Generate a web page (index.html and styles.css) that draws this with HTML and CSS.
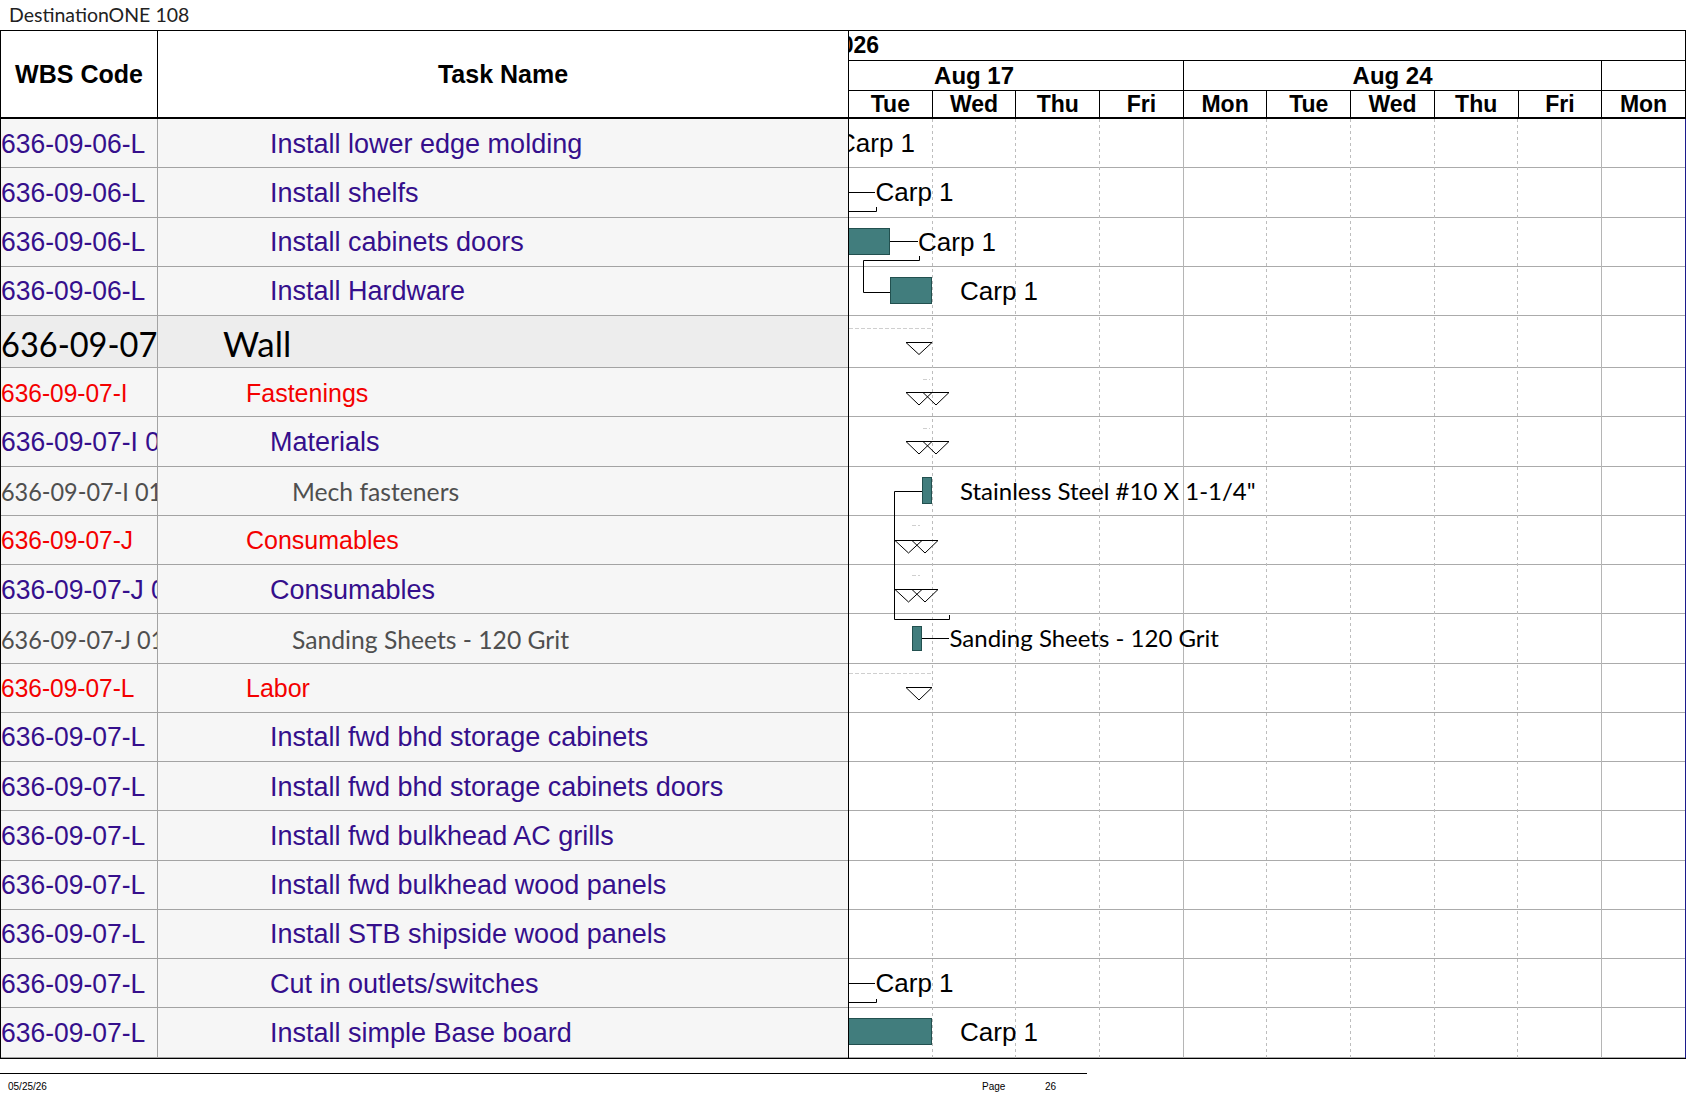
FILE: index.html
```html
<!DOCTYPE html>
<html lang="en">
<head>
<meta charset="utf-8">
<title>DestinationONE 108</title>
<link rel="stylesheet" href="styles.css">
</head>
<body>
<div class="title">DestinationONE 108</div>
<div class="chart">
  <div class="table">
    <div class="thead">
      <div class="th th-wbs">WBS Code</div>
      <div class="th th-name">Task Name</div>
    </div>
    <div class="row task"><div class="wbs"><span>636-09-06-L</span></div><div class="name l3">Install lower edge molding</div></div>
    <div class="row task"><div class="wbs"><span>636-09-06-L</span></div><div class="name l3">Install shelfs</div></div>
    <div class="row task"><div class="wbs"><span>636-09-06-L</span></div><div class="name l3">Install cabinets doors</div></div>
    <div class="row task"><div class="wbs"><span>636-09-06-L</span></div><div class="name l3">Install Hardware</div></div>
    <div class="row wall"><div class="wbs"><span>636-09-07</span></div><div class="name l1">Wall</div></div>
    <div class="row sum"><div class="wbs"><span>636-09-07-I</span></div><div class="name l2">Fastenings</div></div>
    <div class="row task"><div class="wbs"><span>636-09-07-I 01</span></div><div class="name l3">Materials</div></div>
    <div class="row res"><div class="wbs"><span>636-09-07-I 01 01</span></div><div class="name l4">Mech fasteners</div></div>
    <div class="row sum"><div class="wbs"><span>636-09-07-J</span></div><div class="name l2">Consumables</div></div>
    <div class="row task"><div class="wbs"><span>636-09-07-J 01</span></div><div class="name l3">Consumables</div></div>
    <div class="row res"><div class="wbs"><span>636-09-07-J 01 01</span></div><div class="name l4">Sanding Sheets - 120 Grit</div></div>
    <div class="row sum"><div class="wbs"><span>636-09-07-L</span></div><div class="name l2">Labor</div></div>
    <div class="row task"><div class="wbs"><span>636-09-07-L</span></div><div class="name l3">Install fwd bhd storage cabinets</div></div>
    <div class="row task"><div class="wbs"><span>636-09-07-L</span></div><div class="name l3">Install fwd bhd storage cabinets doors</div></div>
    <div class="row task"><div class="wbs"><span>636-09-07-L</span></div><div class="name l3">Install fwd bulkhead AC grills</div></div>
    <div class="row task"><div class="wbs"><span>636-09-07-L</span></div><div class="name l3">Install fwd bulkhead wood panels</div></div>
    <div class="row task"><div class="wbs"><span>636-09-07-L</span></div><div class="name l3">Install STB shipside wood panels</div></div>
    <div class="row task"><div class="wbs"><span>636-09-07-L</span></div><div class="name l3">Cut in outlets/switches</div></div>
    <div class="row task"><div class="wbs"><span>636-09-07-L</span></div><div class="name l3">Install simple Base board</div></div>
  </div>

  <div class="gantt">
    <div class="timescale">
      <div class="strip">
        <div class="tier year">August 2026</div>
        <div class="tier weeks">
          <div class="wk">Aug 17</div>
          <div class="wk">Aug 24</div>
          <div class="wk">Aug 31</div>
        </div>
        <div class="tier days">
          <div class="day">Mon</div><div class="day">Tue</div><div class="day">Wed</div><div class="day">Thu</div><div class="day">Fri</div>
          <div class="day">Mon</div><div class="day">Tue</div><div class="day">Wed</div><div class="day">Thu</div><div class="day">Fri</div>
          <div class="day">Mon</div>
        </div>
      </div>
    </div>
    <div class="gbody">
      <div class="grow"></div><div class="grow"></div><div class="grow"></div><div class="grow"></div>
      <div class="grow grow-wall"></div>
      <div class="grow"></div><div class="grow"></div><div class="grow"></div><div class="grow"></div>
      <div class="grow"></div><div class="grow"></div><div class="grow"></div><div class="grow"></div>
      <div class="grow"></div><div class="grow"></div><div class="grow"></div><div class="grow"></div>
      <div class="grow"></div><div class="grow"></div>

      <svg class="canvas" viewBox="849 119 836 939" width="836" height="939" xmlns="http://www.w3.org/2000/svg">
        <g class="grid-dash">
          <line x1="932.5" y1="119" x2="932.5" y2="1058"/>
          <line x1="1015.5" y1="119" x2="1015.5" y2="1058"/>
          <line x1="1099.5" y1="119" x2="1099.5" y2="1058"/>
          <line x1="1266.5" y1="119" x2="1266.5" y2="1058"/>
          <line x1="1350.5" y1="119" x2="1350.5" y2="1058"/>
          <line x1="1434.5" y1="119" x2="1434.5" y2="1058"/>
          <line x1="1517.5" y1="119" x2="1517.5" y2="1058"/>
        </g>
        <g class="grid-solid">
          <line x1="1183.5" y1="119" x2="1183.5" y2="1058"/>
          <line x1="1601.5" y1="119" x2="1601.5" y2="1058"/>
        </g>
        <g class="summ">
          <path d="M849 328.5H932"/>
          <path d="M849 673.5H932"/>
          <path d="M923 379.5H930"/>
          <path d="M923 428.5H930"/>
          <path d="M912 525.5H920"/>
          <path d="M912 575.5H920"/>
        </g>
        <g class="links">
          <path d="M849 192.5H875"/>
          <path d="M849 211.5H876.5V207"/>
          <path d="M890 241.5H918"/>
          <path d="M919.5 256V260.5H863.5V292.5H890"/>
          <path d="M922 491.5H894.5V619.5H949.5V615"/>
          <path d="M922 638.5H949"/>
          <path d="M849 983.5H875"/>
          <path d="M849 1002.5H876.5V999"/>
        </g>
        <g class="tri">
          <path d="M906 342.5H932L919 354.5Z"/>
          <path d="M906 392.5H949M906 392.5L919 405L932 392.5M923 392.5L936 405L949 392.5"/>
          <path d="M906 441.5H949M906 441.5L919 454L932 441.5M923 441.5L936 454L949 441.5"/>
          <path d="M895 540.5H938M895 540.5L908.5 553L922 540.5M912 540.5L925 553L938 540.5"/>
          <path d="M895 589.5H938M895 589.5L908.5 602L922 589.5M912 589.5L925 602L938 589.5"/>
          <path d="M906 687.5H932L919 700Z"/>
        </g>
        <g class="bars">
          <rect x="848.5" y="228.5" width="41" height="26"/>
          <rect x="890.5" y="277.5" width="41" height="26"/>
          <rect x="922.5" y="477.5" width="9" height="26"/>
          <rect x="912.5" y="626.5" width="9" height="24"/>
          <rect x="848.5" y="1018.5" width="83" height="26"/>
        </g>
        <g class="labels">
          <text class="lb" x="837" y="152">Carp 1</text>
          <text class="lb" x="875.5" y="201">Carp 1</text>
          <text class="lb" x="918" y="251">Carp 1</text>
          <text class="lb" x="960" y="300">Carp 1</text>
          <text class="lbc" x="960" y="500">Stainless Steel #10 X 1-1/4&quot;</text>
          <text class="lbc" x="949.5" y="647">Sanding Sheets - 120 Grit</text>
          <text class="lb" x="875.5" y="992">Carp 1</text>
          <text class="lb" x="960" y="1041">Carp 1</text>
        </g>
      </svg>
    </div>
  </div>
</div>
<div class="footer">
  <span class="f-date">05/25/26</span>
  <span class="f-page">Page</span>
  <span class="f-num">26</span>
</div>
</body>
</html>
```

FILE: styles.css
```css
* { box-sizing: border-box; }

body {
  margin: 0;
  width: 1687px;
  background: #ffffff;
  font-family: "Liberation Sans", Arial, sans-serif;
  color: #000;
}

.title {
  height: 30px;
  line-height: 30px;
  padding-left: 9px;
  font-family: Lato, "Open Sans", sans-serif;
  font-size: 19.5px;
  color: #222;
}

.chart {
  display: flex;
  width: 1686px;
  border-top: 1px solid #000;
  border-bottom: 1px solid #000;
}

/* ---------- left table ---------- */
.table {
  flex: none;
  width: 849px;
  border-left: 1px solid #000;
  border-right: 1px solid #000;
}

.thead {
  display: flex;
  height: 88px;
  border-bottom: 2px solid #000;
  background: #fff;
}

.th {
  display: flex;
  align-items: center;
  justify-content: center;
  font-weight: bold;
  font-size: 25px;
}

.th-wbs {
  width: 157px;
  border-right: 1px solid #000;
}

.th-name { flex: 1; }

.row {
  display: flex;
  height: 49.25px;
  border-bottom: 1px solid #a3a3a3;
  background: #f6f6f6;
  white-space: nowrap;
}

.row .wbs {
  flex: none;
  width: 157px;
  border-right: 1px solid #a3a3a3;
  overflow: hidden;
  display: flex;
  align-items: center;
  padding-top: 2px;
}

.row .wbs span {
  display: inline-block;
  transform: scaleX(0.98);
  transform-origin: left center;
}

.row .name {
  flex: 1;
  display: flex;
  align-items: center;
  overflow: hidden;
  padding-top: 2px;
}

.l1 { padding-left: 65px; }
.l2 { padding-left: 88px; }
.l3 { padding-left: 112px; }
.l4 { padding-left: 134px; }

.task { color: #350f8c; font-size: 27px; }
.sum { color: #f40000; font-size: 25px; }
.res {
  color: #4f4f4f;
  font-family: Lato, "Open Sans", sans-serif;
  font-size: 24.7px;
}
.res .wbs span { transform: scaleX(0.95); }

.wall {
  height: 52px;
  background: #ededed;
  color: #000;
  font-family: Lato, "Open Sans", sans-serif;
  font-size: 35px;
}
.wall .wbs span { transform: scaleX(0.93); }

/* ---------- gantt ---------- */
.gantt {
  flex: none;
  width: 837px;
  overflow: hidden;
}

.timescale {
  height: 88px;
  border-bottom: 2px solid #000;
  border-right: 1px solid #000;
  overflow: hidden;
}

.strip {
  width: 920.7px;
  margin-left: -83.7px;
  font-weight: bold;
}

.tier { white-space: nowrap; }

.year {
  height: 30px;
  line-height: 29px;
  border-bottom: 1px solid #000;
  font-size: 23px;
  text-indent: -23px;
}

.weeks {
  display: flex;
  height: 30px;
  border-bottom: 1px solid #000;
}

.wk {
  flex: 0 0 418.5px;
  border-right: 1px solid #000;
  text-align: center;
  font-size: 24px;
  line-height: 30px;
}

.days {
  display: flex;
  height: 26px;
}

.day {
  flex: 0 0 83.7px;
  border-right: 1px solid #000;
  text-align: center;
  font-size: 23px;
  line-height: 27px;
}

.gbody {
  position: relative;
  border-right: 1px solid #1c1c8c;
  background: #fff;
}

.grow {
  height: 49.25px;
  border-bottom: 1px solid #ababab;
}

.grow-wall { height: 52px; }

.canvas {
  position: absolute;
  left: 0;
  top: 0;
  overflow: hidden;
}

.grid-dash line {
  stroke: #bdbdbd;
  stroke-width: 1;
  stroke-dasharray: 3 3;
}

.grid-solid line {
  stroke: #b5b5b5;
  stroke-width: 1;
}

.summ path {
  fill: none;
  stroke: #cfcfcf;
  stroke-width: 1;
  stroke-dasharray: 4 2;
}

.links path {
  fill: none;
  stroke: #000;
  stroke-width: 1;
}

.tri path {
  fill: none;
  stroke: #000;
  stroke-width: 1;
}

.bars rect {
  fill: #417d7d;
  stroke: #22504f;
  stroke-width: 1;
}

.lb {
  font-family: "Liberation Sans", Arial, sans-serif;
  font-size: 26px;
  fill: #000;
}

.lbc {
  font-family: Lato, "Open Sans", sans-serif;
  font-size: 24px;
  fill: #000;
}

/* ---------- footer ---------- */
.footer {
  display: grid;
  grid-template-columns: 974px 63px auto;
  width: 1087px;
  margin-top: 14px;
  padding: 7px 0 0 8px;
  border-top: 1px solid #000;
  font-family: "Liberation Sans", Arial, sans-serif;
  font-size: 10px;
  line-height: 12px;
  color: #000;
}
```
